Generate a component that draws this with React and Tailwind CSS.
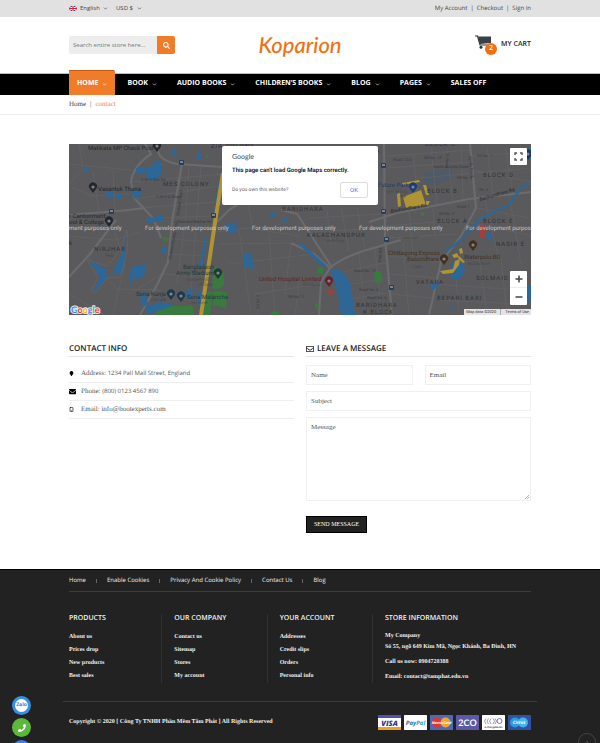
import React from 'react';
import { FaSearch, FaEnvelope, FaRegEnvelope, FaMapMarker, FaPhone } from 'react-icons/fa';
import { ChevronDown, ChevronUp, Smartphone } from 'lucide-react';

const navItems = [
  { label: 'HOME', menu: true, active: true },
  { label: 'BOOK', menu: true },
  { label: 'AUDIO BOOKS', menu: true },
  { label: 'CHILDREN’S BOOKS', menu: true },
  { label: 'BLOG', menu: true },
  { label: 'PAGES', menu: true },
  { label: 'SALES OFF' },
];

const footerLinks = ['Home', 'Enable Cookies', 'Privacy And Cookie Policy', 'Contact Us', 'Blog'];

const footerColumns = [
  { title: 'PRODUCTS', links: ['About us', 'Prices drop', 'New products', 'Best sales'] },
  { title: 'OUR COMPANY', links: ['Contact us', 'Sitemap', 'Stores', 'My account'] },
  { title: 'YOUR ACCOUNT', links: ['Addresses', 'Credit slips', 'Orders', 'Personal info'] },
];

const majorRoads = [
  'M86 0 L91 12 Q97 18 108 20 L154 23',
  'M113 19 L108 48 L103 78 L99 118 L88 141 L71 171',
  'M0 133 L20 111 L47 76',
  'M0 71 L60 66 L75 64',
  'M76 0 L82 10 Q64 22 62 38 L66 55 L84 74 L92 94',
  'M148 78 L160 66 L178 54 L220 50',
  'M315 0 L316 94 L323 171',
  'M222 99 L245 110 L261 124 Q274 112 308 103 L332 96',
  'M261 124 L252 138 L250 171',
  'M300 78 L328 69 L400 55 L462 48',
  'M401 0 L407 64 L392 92 L372 118 L360 171',
  'M212 66 L228 70 L240 88 L262 122',
];

const minorRoads = [
  'M0 20 L62 26', 'M10 0 L14 24 L0 40', 'M62 38 L154 30', 'M66 55 L150 42', 'M70 64 L147 58',
  'M84 74 L146 72', 'M92 94 L140 98', 'M99 110 L138 112', 'M94 130 L136 132', 'M60 150 L96 128',
  'M0 92 L46 96 L70 88', 'M45 85 L56 120 L44 171', 'M16 110 L48 145 L92 146', 'M0 150 L36 171',
  'M120 22 L116 80 L108 140', 'M132 22 L128 70 L120 171', 'M24 28 L30 66', 'M44 26 L46 66',
  'M146 88 L180 84 L230 92', 'M150 100 L222 99', 'M160 120 L245 110', 'M170 86 L182 171',
  'M200 90 L206 171', 'M222 99 L216 150', 'M186 150 L250 140', 'M190 148 L188 171', 'M230 136 L226 171',
  'M240 74 L314 70', 'M258 66 L262 100', 'M272 62 L280 108', 'M288 64 L296 104', 'M240 88 L314 84',
  'M265 130 L320 118', 'M270 142 L320 134', 'M276 156 L322 148', 'M290 108 L296 171', 'M306 104 L312 171',
  'M318 12 L402 6', 'M318 24 L402 18', 'M350 34 L462 24', 'M344 12 L350 62', 'M362 4 L368 60',
  'M378 4 L384 58', 'M392 2 L394 56', 'M404 12 L462 8', 'M404 26 L462 38', 'M418 4 L424 52',
  'M436 4 L444 50', 'M316 82 L392 76', 'M318 94 L388 90', 'M340 68 L344 110', 'M364 64 L366 92',
  'M408 64 L460 74', 'M400 78 L462 92', 'M416 56 L430 116', 'M440 50 L452 120', 'M320 112 L372 118',
  'M321 130 L368 134', 'M322 150 L362 154', 'M334 98 L340 171', 'M366 140 L450 146', 'M370 156 L450 160',
  'M386 118 L390 171', 'M410 112 L418 171', 'M432 112 L438 171', 'M178 54 L184 86', 'M3 44 L24 52 L60 50',
];

const water = [
  'M76 24 l8 -2 2 -5 7 1 -1 12 -6 7 -8 -2z', 'M67 24 l9 -1 -1 7 -8 -1z', 'M102 5 l4 0 2 6 -4 1z',
  'M36 48 l7 -1 2 6 -6 2z', 'M47 49 l6 0 0 6 -5 0z', 'M62 47 l9 -3 1 8 -6 3z', 'M15 24 l5 -1 -1 5 -4 0z',
  'M76 75 l18 -4 1 6 -16 2z', 'M58 88 L55 105 L43 130 L52 130 L55 122 Z', 'M20 116 L37 125 L38 134 L26 147 L25 145 L31 134 Z',
  'M62 123 l15 -3 -2 14 -13 1 2 7 -4 -3z', 'M93 103 l5 0 -1 7 -4 0z', 'M149 40 L153 39 L149 68 L145 68 Z',
  'M136 93 L138 94 L133 124 L130 124 Z', 'M157 80 l10 -2 1 10 -9 1z', 'M174 109 l9 1 1 15 -10 -2z',
  'M71 152 l5 -4 3 12 -5 3z', 'M76 163 l15 -5 15 3 -15 5 -12 5z', 'M118 144 l6 2 -2 9 -5 -1z',
  'M129 8 l4 1 -2 8 -4 -2z', 'M129 146 l8 4 -3 13 -5 -1z', 'M202 68 l5 1 -2 5 -4 -1z', 'M213 75 l6 -1 -3 7z',
  'M232 99 L257 121 L255 124 L230 101 Z', 'M261 126 Q275 122 282 143 L286 171 L272 171 Q270 147 261 126Z',
  'M383 119 Q393 112 396 126 Q393 137 384 136 Q380 130 382 127Z', 'M418 88 l5 2 -1 8 -5 -5z',
  'M361 141 l9 -3 -1 6 -7 2z', 'M459 142 l3 -1 0 18 -3 -3z', 'M380 164 l4 -2 1 4z', 'M458 5 l4 -1 0 11 -4 -1z',
];

const greens = [
  'M145 123 Q156 122 155 140 Q151 148 143 144Z', 'M145 147 l13 1 -1 16 -13 -3z', 'M94 162 l30 0 1 9 -40 0z',
  'M139 147 l5 1 -3 23 -9 0z', 'M95 93 l4 1 -1 4 -4 -1z', 'M305 128 l7 -1 1 11 -7 1z', 'M249 124 l5 0 0 5 -5 0z',
  'M352 68 l3 0 0 4 -3 0z', 'M246 159 l4 1 -1 5 -3 -1z', 'M137 11 l2 0 0 3 -2 0z', 'M202 168 l8 -1 0 4 -8 0z',
];

const yellows = [
  'M334 53 l18 -7 5 15 -20 3z', 'M333 39 l17 -3 1 2 -17 3z', 'M354 41 l3 0 3 10 -3 0z', 'M328 50 l3 -1 1 13 -3 1z',
  'M357 57 l4 0 -2 4 -2 0z', 'M371 127 l13 -2 2 -8 5 -2 -1 6 -6 8 -10 1z', 'M383 111 l5 -2 2 4 -5 1z', 'M390 105 l3 -1 1 5 -3 1z', 'M390 112 l6 6 -2 1 -5 -5z',
];

const areaLabels = [
  [142, 4, 'ZIA COLONY'], [94, 42, 'MES COLONY'], [25, 107, 'NIRJHAR'], [213, 67, 'BARIDHARA'],
  [302, 9, 'RA'], [356, 2, 'BLOCK C'], [414, 33, 'BLOCK D'], [358, 49, 'BLOCK B'], [368, 79, 'BLOCK A'],
  [414, 79, 'BLOCK E'], [238, 93, 'KALACHANDPUR'], [427, 102, 'NASIR E'], [407, 136, 'SOLMAID'],
  [347, 140, 'VATARA'], [368, 156, 'BEPARI BARI'], [287, 163, 'BARIDHARA'], [294, 170, 'K BLOCK'],
];

const placeLabels = [
  [19, 6, 'Matikata MP Check Post', '#24272b'], [29, 47, 'Vasantek Thana', '#24272b'],
  [0, 74, 'r Cantonment', '#24272b'], [0, 80, 'ool & College', '#24272b'], [0, 101, 'k', '#24272b'],
  [114, 125, 'Bangladesh', '#1d3a36'], [107, 131, 'Army Stadium', '#1d3a36'],
  [67, 152, 'Sena Kunja', '#1d3a3f'], [118, 155, 'Sena Malancha', '#1d3a3f'],
  [190, 137, 'United Hospital Limited', '#5c2426'], [309, 43, 'Future Park', '#1f3a68'],
  [319, 111, 'Chittagong Express', '#43301c'], [338, 117, 'Basundhara', '#43301c'], [395, 115, 'Waterpolo BD', '#43301c'],
];

const tinyLabels = [
  [72, 37, 'C M H Site Rd'], [87, 54, 'C M H A Road'], [108, 79, 'Shaheed Bashar Rd'], [36, 113, 'নির্ঝর'],
  [117, 137, 'বাংলাদেশ আর্মি'], [129, 142, 'স্টেডিয়াম'], [82, 157, 'সেনা কুঞ্জ'], [120, 160, 'সেনা মালঞ্চ'],
  [257, 98, 'কালাচাঁদপুর'], [317, 49, 'যমুনা ফিউচার'], [330, 54, 'পার্ক'], [364, 24, 'Apollo Access Road'],
  [324, 17, 'Road 12/A'], [355, 15, 'Rd No. 10'], [388, 35, 'Rd No. 8'], [408, 13, 'Rd No. 7'], [370, 71, 'Rd No. 2'],
  [388, 64, 'Road 1'], [410, 47, 'Rd. 4'], [285, 128, 'Road No. 12'], [290, 147, 'Road No. 8'], [298, 155, 'Road No. 6'],
  [334, 95, 'নদ্দা ঢাকা'], [342, 124, 'চট্টগ্রাম'], [398, 121, 'ওয়াটারপোলো'], [234, 142, 'ইউনাইটেড'],
  [219, 154, 'Rd No 71'],
];

const pins = [
  [88, 8, '#24272b'], [24, 49, '#24272b'], [40, 83, '#24272b'], [149, 135, '#1d3a36'], [102, 156, '#1d3a4a'],
  [112, 158, '#1d3a4a'], [260, 143, '#64232a'], [344, 49, '#1b3d7a'], [375, 121, '#43301c'], [404, 107, '#43301c'],
  [459, 16, '#173864'],
];

const stations = [[112, 18], [42, 67], [144, 71], [314, 21], [314, 67], [317, 95], [322, 143]];

function MapDrawing() {
  return (
    <svg viewBox="0 0 462 171" preserveAspectRatio="xMidYMid slice" className="block aspect-[462/171] w-full bg-[#5a5a5c]" role="img" aria-label="Map">
      <path d="M355 29 l28 -5 1 12 -28 5z" fill="#4f5a68" />
      <g fill="none" stroke="#636366" strokeWidth="0.8">
        {minorRoads.map((d) => <path key={d} d={d} />)}
      </g>
      <g fill="none" stroke="#6b6b6e" strokeWidth="2.2">
        {majorRoads.map((d) => <path key={d} d={d} />)}
      </g>
      <g fill="#397a3f">{greens.map((d) => <path key={d} d={d} />)}</g>
      <g fill="#2d6797">{water.map((d) => <path key={d} d={d} />)}</g>
      <path d="M376 108 L394 94 L412 74 L440 61 L452 44 L460 39" fill="none" stroke="#2d6797" strokeWidth="2.2" />
      <g fill="#ae9435">{yellows.map((d) => <path key={d} d={d} />)}</g>
      <path d="M154 29 L147 72 L141 112 L132 171" fill="none" stroke="#ae9435" strokeWidth="4" />
      <path d="M411 81 l5 0 0 13 -6 0z M259 146 l5 0 -1 5 -3 0z" fill="#a33f3a" />
      <path d="M58 86 Q61 105 51 133 L38 134 L26 149 L22 147 L29 133 L18 116 L38 122 Q50 112 58 86" fill="none" stroke="#75706c" strokeWidth="0.7" strokeDasharray="1 1" />
      {stations.map(([x, y]) => (
        <g key={`${x}-${y}`}>
          <rect x={x - 2} y={y - 2} width="5" height="5" rx="1" fill="#263e5c" />
          <rect x={x - 1} y={y - 1} width="3" height="2" fill="#7b8591" />
        </g>
      ))}
      <g fontFamily="Roboto, sans-serif" fontSize="4" fill="#3b3c3f">
        {tinyLabels.map(([x, y, t]) => <text key={t} x={x} y={y}>{t}</text>)}
        <text transform="translate(102 116) rotate(-80)">Shaheed Bashar Road</text>
        <text transform="translate(110 72) rotate(-82)">Shaheed Road</text>
        <text transform="translate(190 165) rotate(-88)">Rd No 3</text>
        <text transform="translate(312 118) rotate(-86)">Park Rd</text>
        <text transform="translate(400 12) rotate(85)">Apollo Road</text>
        <text transform="translate(379 24) rotate(-85)">Rd No 5</text>
      </g>
      <g fontFamily="Roboto, sans-serif" fontSize="5" fill="#26282b">
        <text transform="translate(322 69) rotate(-10)">Bashundhara Rd</text>
        <text transform="translate(411 57) rotate(-16)">Bashundhara Rd</text>
      </g>
      <g fontFamily="Roboto, sans-serif" fontSize="6" letterSpacing="1" fill="#303236">
        {areaLabels.map(([x, y, t]) => <text key={`${t}${x}`} x={x} y={y}>{t}</text>)}
      </g>
      <g fontFamily="Roboto, sans-serif" fontSize="6">
        {placeLabels.map(([x, y, t, c]) => <text key={t} x={x} y={y} fill={c}>{t}</text>)}
      </g>
      {pins.map(([x, y, c]) => (
        <g key={`${x}-${y}`} transform={`translate(${x} ${y})`}>
          <path d="M0 0 L-3 -4 A4 4 0 1 1 3 -4 Z" fill={c} />
          <circle cx="0" cy="-6" r="1.6" fill="#80858c" />
        </g>
      ))}
      <g fontFamily="Roboto, sans-serif" fontSize="6" fill="#c8c8c8">
        {[-31, 76, 183, 290, 397].map((x) => (
          <text key={x} x={x} y="86">For development purposes only</text>
        ))}
      </g>
    </svg>
  );
}

function GoogleMark() {
  return (
    <span className="absolute bottom-0 left-0.5 font-['Lato',sans-serif] text-[9px] leading-[11px] font-bold [-webkit-text-stroke:2px_#e8e8e8] [paint-order:stroke_fill]">
      <span className="text-[#4285f4]">G</span>
      <span className="text-[#ea4335]">o</span>
      <span className="text-[#fbbc05]">o</span>
      <span className="text-[#4285f4]">g</span>
      <span className="text-[#34a853]">l</span>
      <span className="text-[#ea4335]">e</span>
    </span>
  );
}

function MapSection() {
  return (
    <section className="relative overflow-hidden">
      <MapDrawing />
      <div className="absolute inset-x-0 top-0.5 mx-auto h-[59px] w-[156px] rounded-xs bg-white px-[10px] pt-[6px] font-['Roboto',sans-serif]">
        <p className="font-['Lato',sans-serif] text-[7px] leading-[10px] text-[#444]">Google</p>
        <p className="mt-1 text-[6px] leading-[10px] font-medium whitespace-nowrap text-black">This page can't load Google Maps correctly.</p>
        <div className="mt-[6px] flex items-center justify-between">
          <a href="#own" className="text-[5px] leading-[10px] text-[#666]">Do you own this website?</a>
          <button className="h-4 w-7 rounded-xs border border-[#dadce0] text-[6px] leading-[10px] text-[#3b78e7]">OK</button>
        </div>
      </div>
      <button aria-label="Toggle fullscreen" className="absolute top-1 right-1 flex h-[17px] w-[17px] items-center justify-center rounded-[1px] bg-white">
        <svg viewBox="0 0 9 9" className="h-[9px] w-[9px]" fill="none" stroke="#555" strokeWidth="1.4">
          <path d="M1 3V1h2M6 1h2v2M8 6v2H6M3 8H1V6" />
        </svg>
      </button>
      <div className="absolute right-1 bottom-[10px] flex w-[17px] flex-col rounded-[1px] bg-white">
        <button aria-label="Zoom in" className="flex h-[17px] items-center justify-center border-b border-[#eee]">
          <svg viewBox="0 0 8 8" className="h-2 w-2" stroke="#444" strokeWidth="1.5"><path d="M4 0.5v7M0.5 4h7" /></svg>
        </button>
        <button aria-label="Zoom out" className="flex h-[17px] items-center justify-center">
          <svg viewBox="0 0 8 8" className="h-2 w-2" stroke="#444" strokeWidth="1.5"><path d="M0.5 4h7" /></svg>
        </button>
      </div>
      <GoogleMark />
      <div className="absolute right-0 bottom-0 flex gap-1 bg-[#e4e4e4] px-0.5 font-['Roboto',sans-serif] text-[4px] leading-[6px] text-[#333]">
        <span>Map data ©2020</span>
        <span className="w-px bg-[#aaa]" />
        <a href="#terms">Terms of Use</a>
      </div>
    </section>
  );
}

function TopBar() {
  return (
    <div className="bg-[#e1e1e1] text-[6px] leading-[17px] text-[#444]">
      <div className="mx-auto flex w-[77%] justify-between">
        <div className="flex items-center">
          <svg viewBox="0 0 16 10" className="mr-[3px] h-[5px] w-2">
            <path d="M0 0h16v10H0z" fill="#34448c" />
            <path d="M0 0l16 10M16 0L0 10" stroke="#fff" strokeWidth="2" />
            <path d="M8 0v10M0 5h16" stroke="#fff" strokeWidth="4" />
            <path d="M8 0v10M0 5h16" stroke="#d5202f" strokeWidth="2.4" />
          </svg>
          <select aria-label="Language" className="appearance-none bg-transparent">
            <option>English</option>
          </select>
          <ChevronDown className="ml-[3px] size-[5px]" strokeWidth={3} />
          <select aria-label="Currency" className="ml-2 appearance-none bg-transparent">
            <option>USD $</option>
          </select>
          <ChevronDown className="ml-[3px] size-[5px]" strokeWidth={3} />
        </div>
        <div className="flex gap-[3px]">
          <a href="#account">My Account</a>
          <span>|</span>
          <a href="#checkout">Checkout</a>
          <span>|</span>
          <a href="#signin">Sign In</a>
        </div>
      </div>
    </div>
  );
}

function Header() {
  return (
    <header className="mx-auto grid h-14 w-[77%] grid-cols-[1fr_auto_1fr] items-center">
      <form className="flex h-[18px] w-[106px]" onSubmit={(e) => e.preventDefault()}>
        <input
          type="text"
          aria-label="Search"
          placeholder="Search entire store here..."
          className="min-w-0 flex-1 rounded-l-xs bg-[#ededed] px-1 text-[6px] placeholder:text-[#777]"
        />
        <button aria-label="Search" className="flex w-[18px] items-center justify-center rounded-r-xs bg-[#f07c29] text-white">
          <FaSearch className="size-[7px]" />
        </button>
      </form>
      <a href="#home" className="font-['Lato',cursive] text-[22px] leading-6 font-medium text-[#f07013] italic">Koparion</a>
      <a href="#cart" className="flex items-center justify-self-end text-[7px] font-semibold text-[#222]">
        <span className="relative mr-[10px] h-5 w-4">
          <svg viewBox="0 0 16 14" className="h-[14px] w-4">
            <path d="M0 1h2.500l2.500 9h10" fill="none" stroke="#333" strokeWidth="1.2" />
            <path d="M3 1.500h13v6.500l-11 1z" fill="#3a3f43" />
            <circle cx="6" cy="12.300" r="1.500" fill="#333" />
            <circle cx="13" cy="12.300" r="1.500" fill="#333" />
          </svg>
          <span className="absolute top-2 left-[10px] flex size-3 items-center justify-center rounded-full bg-[#f07013] text-white">2</span>
        </span>
        MY CART
      </a>
    </header>
  );
}

function NavBar() {
  return (
    <nav className="border-t border-[#bbb] bg-black">
      <div className="mx-auto flex h-[21px] w-[77%] items-end gap-1 text-[7px] font-bold whitespace-nowrap text-white">
        {navItems.map((item) => (
          <a
            key={item.label}
            href="#nav"
            className={
              item.active
                ? 'flex h-[25px] shrink-0 items-center gap-1 rounded-tr-xs border-t border-[#c65a10] bg-[#f07c29] px-2 pt-[3px]'
                : 'flex h-[21px] shrink-0 items-center gap-1 px-2'
            }
          >
            {item.label}
            {item.menu && <ChevronDown className="size-[5px]" strokeWidth={3} />}
          </a>
        ))}
      </div>
    </nav>
  );
}

const inputClass = "block w-full border border-[#f0f0f0] bg-white px-1 font-['Liberation_Serif',serif] text-[7px] placeholder:text-[#555]";

function Contact() {
  return (
    <div className="mt-7 grid grid-cols-2 gap-3">
      <section>
        <h2 className="h-[14px] border-b border-[#e5e5e5] text-[8px] leading-[11px] font-semibold text-[#222]">CONTACT INFO</h2>
        <ul className="mt-2 font-['Liberation_Serif',serif] text-[7px] leading-[17px] text-[#555]">
          <li className="flex items-center border-b border-[#eee]">
            <FaMapMarker className="mr-[7px] size-[5px] text-black" />
            <span>Address: <span className="font-['Open_Sans',sans-serif] text-[6px]">1234 Pall Mall Street, England</span></span>
          </li>
          <li className="flex items-center border-b border-[#eee]">
            <FaEnvelope className="mr-[5px] size-[7px] text-black" />
            <span>Phone: <span className="font-['Open_Sans',sans-serif] text-[6px]">(800) 0123 4567 890</span></span>
          </li>
          <li className="flex items-center border-b border-[#eee]">
            <Smartphone className="mr-[7px] size-[5px] text-black" strokeWidth={3} />
            <span>Email: info@bootexperts.com</span>
          </li>
        </ul>
      </section>
      <section>
        <h2 className="flex h-[14px] gap-[3px] border-b border-[#e5e5e5] text-[8px] leading-[11px] font-semibold text-[#222]">
          <FaRegEnvelope className="mt-[2px] size-2" />
          LEAVE A MESSAGE
        </h2>
        <form className="mt-2" onSubmit={(e) => e.preventDefault()}>
          <div className="grid grid-cols-2 gap-3">
            <input type="text" aria-label="Name" placeholder="Name" className={`${inputClass} h-5`} />
            <input type="email" aria-label="Email" placeholder="Email" className={`${inputClass} h-5`} />
          </div>
          <input type="text" aria-label="Subject" placeholder="Subject" className={`${inputClass} mt-[6px] h-5`} />
          <div className="relative mt-[6px]">
            <textarea aria-label="Message" placeholder="Message" className={`${inputClass} h-[84px] resize-none pt-1`} />
            <svg viewBox="0 0 4 4" className="absolute right-0.5 bottom-0.5 size-1" stroke="#999" strokeWidth="0.7">
              <path d="M0 4L4 0M2 4L4 2" />
            </svg>
          </div>
          <button className="mt-[15px] h-[17px] border border-black bg-[#222] px-[7px] font-['Liberation_Serif',serif] text-[6px] text-white">SEND MESSAGE</button>
        </form>
      </section>
    </div>
  );
}

function PaymentCards() {
  return (
    <div className="flex gap-[3px]">
      <svg viewBox="0 0 46 30" className="h-[15px] w-[23px]">
        <rect width="46" height="30" rx="1" fill="#fff" />
        <path d="M0 0h46v6H0z" fill="#4a52b5" />
        <path d="M0 24h46v6H0z" fill="#f2a01c" />
        <text x="23" y="21" textAnchor="middle" fontFamily="Open Sans, sans-serif" fontWeight="800" fontStyle="italic" fontSize="15" fill="#31388c">VISA</text>
      </svg>
      <svg viewBox="0 0 46 30" className="h-[15px] w-[23px]">
        <rect width="46" height="30" rx="1" fill="#fff" />
        <text x="23" y="19" textAnchor="middle" fontFamily="Open Sans, sans-serif" fontWeight="700" fontStyle="italic" fontSize="12" fill="#1f6f9f">Pay<tspan fill="#26a0cf">Pal</tspan></text>
      </svg>
      <svg viewBox="0 0 46 30" className="h-[15px] w-[23px]">
        <rect width="46" height="30" rx="1" fill="#4a6cb8" />
        <circle cx="14" cy="15" r="10" fill="#e5342f" />
        <circle cx="31" cy="15" r="10" fill="#f8a32b" />
        <text x="23" y="18" textAnchor="middle" fontFamily="Open Sans, sans-serif" fontWeight="700" fontStyle="italic" fontSize="7" fill="#fff">MasterCard</text>
      </svg>
      <svg viewBox="0 0 46 30" className="h-[15px] w-[23px]">
        <rect width="46" height="30" rx="1" fill="#5d5aa5" />
        <text x="23" y="21" textAnchor="middle" fontFamily="Lato, sans-serif" fontWeight="700" fontSize="18" fill="#fff">2CO</text>
      </svg>
      <svg viewBox="0 0 46 30" className="h-[15px] w-[23px]">
        <rect width="46" height="30" rx="1" fill="#fff" />
        <g fill="none" stroke="#77749f" strokeWidth="1.5">
          <path d="M8 7q-6 5 0 11M13 7q-6 5 0 11M18 7q-6 5 0 11M22 7q6 5 0 11M26 7q6 5 0 11" />
          <circle cx="35" cy="12" r="5" strokeWidth="2" />
        </g>
        <text x="23" y="25" textAnchor="middle" fontFamily="Open Sans, sans-serif" fontSize="5" fill="#444">e-chargebacks</text>
      </svg>
      <svg viewBox="0 0 46 30" className="h-[15px] w-[23px]">
        <rect width="46" height="30" rx="1" fill="#31529f" />
        <circle cx="14" cy="15" r="10" fill="#2f9be0" />
        <circle cx="30" cy="15" r="10" fill="#45b4ee" />
        <text x="22" y="18" textAnchor="middle" fontFamily="Open Sans, sans-serif" fontWeight="700" fontStyle="italic" fontSize="9" fill="#fff">Cirrus</text>
      </svg>
    </div>
  );
}

function Footer() {
  return (
    <footer className="mt-9 border-t border-black bg-[#222] font-['Liberation_Serif',serif] text-[6px] font-bold text-[#f0f0f0]">
      <div className="mx-auto w-[77%]">
        <div className="flex h-[22px] items-center border-b border-[#3c3c3c] font-['Open_Sans',sans-serif] text-[6px] font-medium">
          {footerLinks.map((link, i) => (
            <React.Fragment key={link}>
              {i > 0 && <span className="mx-[10px] h-1 w-px bg-[#666]" />}
              <a href="#footer">{link}</a>
            </React.Fragment>
          ))}
        </div>
        <div className="mt-[22px] grid grid-cols-[1fr_1fr_1fr_146px]">
          {footerColumns.map((col) => (
            <div key={col.title} className="mr-3 h-[69px] border-r border-[#303030]">
              <h3 className="font-['Open_Sans',sans-serif] text-[7px] leading-[10px] font-semibold">{col.title}</h3>
              <ul className="mt-2 grid gap-[2px] leading-[11px]">
                {col.links.map((link) => (
                  <li key={link}><a href="#footer">{link}</a></li>
                ))}
              </ul>
            </div>
          ))}
          <div className="whitespace-nowrap">
            <h3 className="font-['Open_Sans',sans-serif] text-[7px] leading-[10px] font-semibold">STORE INFORMATION</h3>
            <p className="mt-[7px] leading-[11px]">My Company<br />Số 55, ngõ 649 Kim Mã, Ngọc Khánh, Ba Đình, HN</p>
            <p className="mt-1 leading-[11px]">Call us now: 0904720388</p>
            <p className="mt-1 leading-[11px]">Email: contact@tamphat.edu.vn</p>
          </div>
        </div>
      </div>
      <div className="mx-auto mt-[18px] flex h-[42px] w-[79%] items-center justify-between border-t border-[#3c3c3c] px-[6px]">
        <p>Copyright © 2020 [ Công Ty TNHH Phần Mềm Tâm Phát ] All Rights Reserved</p>
        <PaymentCards />
      </div>
    </footer>
  );
}

function FloatingButtons() {
  return (
    <>
      <div className="fixed -bottom-4 left-3 flex flex-col gap-[3px]">
        <a href="#zalo" aria-label="Zalo" className="flex size-[19px] items-center justify-center rounded-full bg-[#3490e6]">
          <span className="flex size-[13px] items-center justify-center rounded-full bg-white text-[5px] font-bold text-[#2582d8]">Zalo</span>
        </a>
        <a href="#call" aria-label="Call" className="flex size-[19px] items-center justify-center rounded-full bg-[#5cb83c] text-white">
          <FaPhone className="size-2" />
        </a>
        <a href="#chat" aria-label="Chat" className="flex size-[19px] items-center justify-center rounded-full bg-[#3b7ff0]">
          <span className="size-[9px] rounded-full bg-white" />
        </a>
      </div>
      <button aria-label="Back to top" className="fixed right-1 -bottom-2 flex size-[18px] items-center justify-center rounded-full border border-[#444] text-[#555]">
        <ChevronUp className="size-2" />
      </button>
    </>
  );
}

export default function App() {
  return (
    <div className="bg-white font-['Open_Sans',sans-serif] [text-rendering:geometricPrecision]">
      <TopBar />
      <Header />
      <NavBar />
      <div className="border-b border-[#eee]">
        <div className="mx-auto flex w-[77%] gap-1 font-['Liberation_Serif',serif] text-[7px] leading-[19px] text-[#444]">
          <a href="#home">Home</a>
          <span>|</span>
          <span className="text-[#f07c50]">contact</span>
        </div>
      </div>
      <main className="mx-auto mt-[29px] w-[77%]">
        <MapSection />
        <Contact />
      </main>
      <Footer />
      <FloatingButtons />
    </div>
  );
}
